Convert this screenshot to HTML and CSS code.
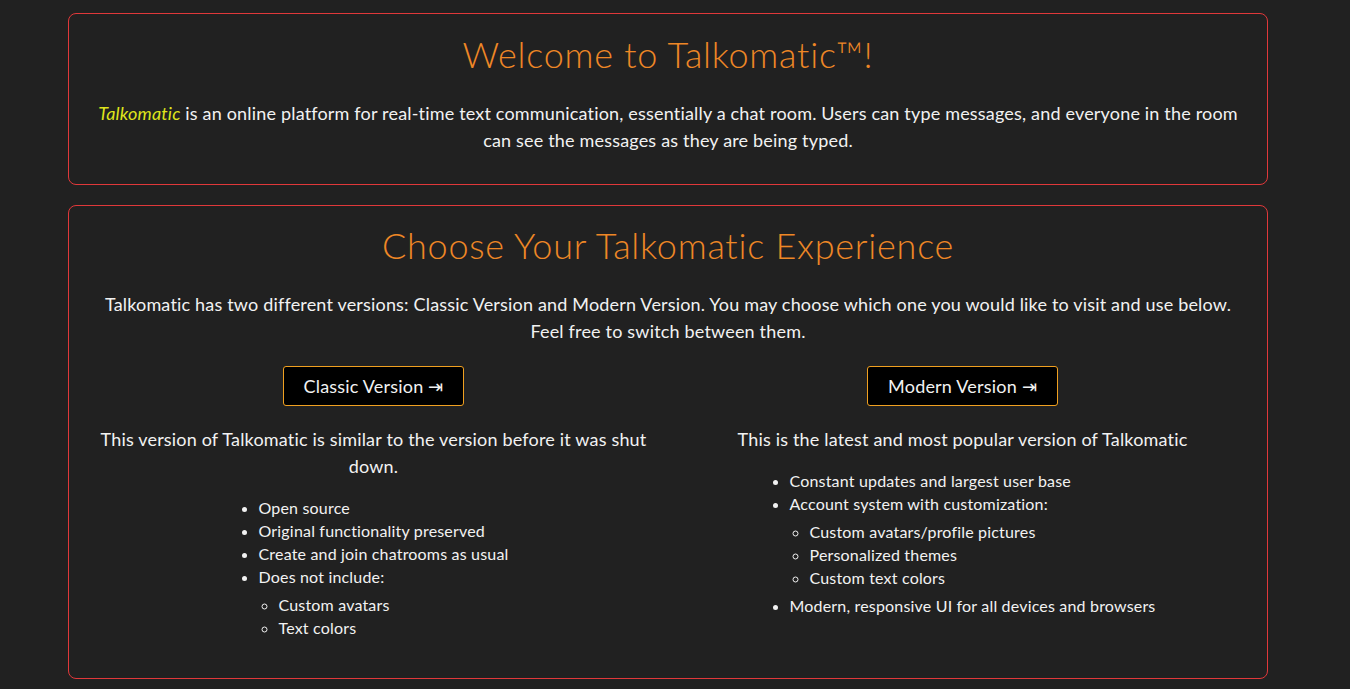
FILE: index.html
```html
<!DOCTYPE html>
<html lang="en">
<head>
<meta charset="utf-8">
<title>Talkomatic</title>
<link rel="stylesheet" href="styles.css">
</head>
<body>
<main class="page">
  <section class="card card-welcome">
    <h1 class="title">Welcome to Talkomatic™!</h1>
    <p class="lead"><em class="brand">Talkomatic</em> is an online platform for real-time text communication, essentially a chat room. Users can type messages, and everyone in the room can see the messages as they are being typed.</p>
  </section>
  <section class="card card-choose">
    <h2 class="title">Choose Your Talkomatic Experience</h2>
    <p class="lead">Talkomatic has two different versions: Classic Version and Modern Version. You may choose which one you would like to visit and use below. Feel free to switch between them.</p>
    <div class="versions">
      <div class="version">
        <a class="btn" href="#">Classic Version ⇥</a>
        <p class="desc">This version of Talkomatic is similar to the version before it was shut down.</p>
        <ul class="features">
          <li>Open source</li>
          <li>Original functionality preserved</li>
          <li>Create and join chatrooms as usual</li>
          <li>Does not include:
            <ul class="sub">
              <li>Custom avatars</li>
              <li>Text colors</li>
            </ul>
          </li>
        </ul>
      </div>
      <div class="version">
        <a class="btn" href="#">Modern Version ⇥</a>
        <p class="desc">This is the latest and most popular version of Talkomatic</p>
        <ul class="features">
          <li>Constant updates and largest user base</li>
          <li>Account system with customization:
            <ul class="sub">
              <li>Custom avatars/profile pictures</li>
              <li>Personalized themes</li>
              <li>Custom text colors</li>
            </ul>
          </li>
          <li>Modern, responsive UI for all devices and browsers</li>
        </ul>
      </div>
    </div>
  </section>
</main>
</body>
</html>
```
FILE: styles.css
```css
html, body {
  margin: 0;
  padding: 0;
  background: #212121;
}
body {
  font-family: "Lato", "Liberation Sans", sans-serif;
  color: #f2f2f2;
}
.page {
  width: 1200px;
  margin: 13px 0 0 68px;
  display: flex;
  flex-direction: column;
  gap: 20px;
}
.card {
  border: 1px solid #e0383a;
  border-radius: 8px;
  padding: 19px 25px 30px;
  text-align: center;
}
.card-choose {
  padding-top: 18px;
  padding-bottom: 34px;
}
.title {
  margin: 0;
  font-size: 36px;
  line-height: 42px;
  font-weight: 300;
  letter-spacing: 0.75px;
  color: #ee8726;
}
.lead {
  margin: 25px 0 0;
  font-size: 18px;
  line-height: 27px;
  letter-spacing: 0.18px;
}
.brand {
  color: #dfe41c;
}
.versions {
  display: grid;
  grid-template-columns: 1fr 1fr;
  gap: 30px;
  margin-top: 21px;
}
.version {
  display: flex;
  flex-direction: column;
  align-items: center;
}
.btn {
  display: inline-block;
  background: #000;
  color: #f2f2f2;
  border: 1px solid #f0a020;
  border-radius: 3px;
  padding: 0 20px;
  height: 38px;
  line-height: 38px;
  font-size: 18px;
  letter-spacing: 0.2px;
  text-decoration: none;
}
.desc {
  margin: 20px 0 0;
  font-size: 18px;
  line-height: 27px;
  letter-spacing: 0.18px;
}
.features {
  margin: 16px 0 0;
  padding-left: 20px;
  text-align: left;
  font-size: 16px;
  line-height: 23px;
  letter-spacing: 0.18px;
}
.sub {
  list-style: circle;
  margin: 5px 0;
  padding-left: 20px;
}
```
